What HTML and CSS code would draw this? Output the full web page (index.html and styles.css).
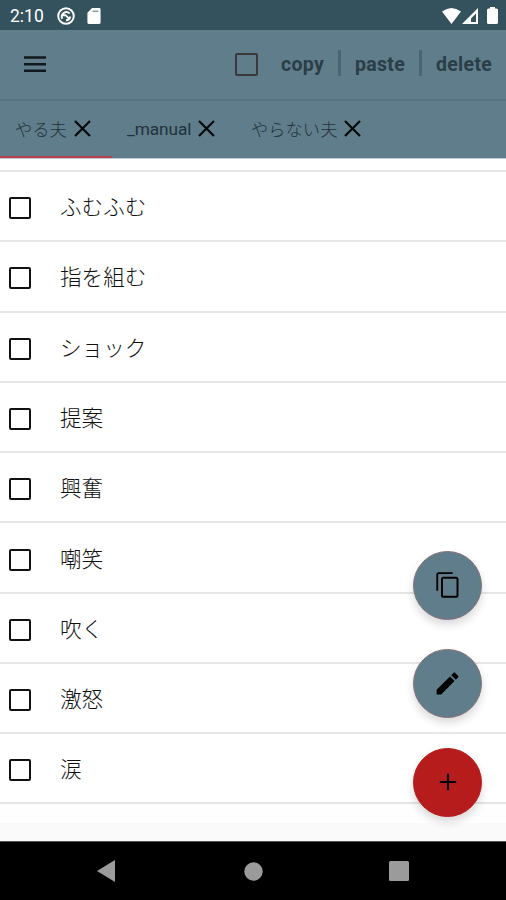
FILE: index.html
```html
<!DOCTYPE html>
<html lang="ja">
<head>
<meta charset="utf-8">
<title>やる夫</title>
<link rel="stylesheet" href="styles.css">
</head>
<body>
<div class="screen">
  <header class="status">
    <span class="clock">2:10</span>
    <svg class="status-sync" viewBox="0 0 18 18"><circle cx="9" cy="9" r="7.800"/><path d="M5.300 11.800A4.600 4.600 0 0 1 12.700 6.500M13.300 9.500A4.600 4.600 0 0 1 9 13.300M5.800 8.200h2.700l4 4"/></svg>
    <svg class="status-sd" viewBox="0 0 14 17"><path fill="#fff" d="M5 0h7.500A1.500 1.500 0 0 1 14 1.500V15.500A1.500 1.500 0 0 1 12.500 17h-11A1.500 1.500 0 0 1 0 15.500V5z"/><path stroke="#839aa3" stroke-width="1.600" d="M5.500 3.500h6"/></svg>
    <div class="signals">
      <svg width="19" height="16" viewBox="0 0 19 16"><path fill="#fff" d="M0 3.500Q9.500-3.500 19 3.500L9.500 16z"/></svg>
      <svg width="16" height="16" viewBox="0 0 16 16"><path fill="#fff" fill-rule="evenodd" d="M16 0v16H0zM14 5.500L9 10.500V14h5z"/></svg>
      <svg class="battery" width="11" height="17" viewBox="0 0 11 17"><path fill="#fff" d="M3 0h5v1.500h1.500A1.500 1.500 0 0 1 11 3v12.500A1.500 1.500 0 0 1 9.500 17h-8A1.500 1.500 0 0 1 0 15.500V3A1.500 1.500 0 0 1 1.500 1.500H3z"/></svg>
    </div>
  </header>
  <div class="toolbar">
    <svg class="menu" viewBox="0 0 22 16"><path d="M0 1.500h22M0 8.200h22M0 14.700h22"/></svg>
    <span class="check check-all"></span>
    <span class="action copy">copy</span><span class="bar"></span>
    <span class="action paste">paste</span><span class="bar"></span>
    <span class="action delete">delete</span>
  </div>
  <nav class="tabs">
    <div class="tab active"><span>やる夫</span><svg viewBox="0 0 17 17"><path d="M1 1l15 15M16 1L1 16"/></svg></div>
    <div class="tab manual"><span>_manual</span><svg viewBox="0 0 17 17"><path d="M1 1l15 15M16 1L1 16"/></svg></div>
    <div class="tab"><span>やらない夫</span><svg viewBox="0 0 17 17"><path d="M1 1l15 15M16 1L1 16"/></svg></div>
  </nav>
  <main class="list">
    <div class="row"><span class="check"></span><span class="label">ふむふむ</span></div>
    <div class="row"><span class="check"></span><span class="label">指を組む</span></div>
    <div class="row"><span class="check"></span><span class="label">ショック</span></div>
    <div class="row"><span class="check"></span><span class="label">提案</span></div>
    <div class="row"><span class="check"></span><span class="label">興奮</span></div>
    <div class="row"><span class="check"></span><span class="label">嘲笑</span></div>
    <div class="row"><span class="check"></span><span class="label">吹く</span></div>
    <div class="row"><span class="check"></span><span class="label">激怒</span></div>
    <div class="row"><span class="check"></span><span class="label">涙</span></div>
  </main>
  <div class="below"></div>
  <footer class="navbar">
    <svg width="18" height="22" viewBox="0 0 18 22"><path d="M18 0v22L0 11z"/></svg>
    <svg class="home" width="19" height="19" viewBox="0 0 19 19"><circle cx="9.500" cy="9.500" r="9.200"/></svg>
    <svg width="20" height="20" viewBox="0 0 20 20"><rect width="20" height="20" rx="1.500"/></svg>
  </footer>
  <div class="fabs">
    <div class="fab"><svg width="28" height="28" viewBox="0 0 24 24"><path d="M16 1H4c-1.100 0-2 .9-2 2v14h1.600V2.600H16V1zm3 4H8c-1.100 0-2 .9-2 2v14c0 1.100.9 2 2 2h11c1.100 0 2-.9 2-2V7c0-1.100-.9-2-2-2zm.3 16.300H7.700V6.700h11.600v14.600z"/></svg></div>
    <div class="fab"><svg width="29" height="29" viewBox="0 0 24 24"><path d="M3 17.250V21h3.750L17.810 9.940l-3.750-3.750L3 17.250zM20.710 7.040c.39-.39.39-1.020 0-1.410l-2.340-2.340c-.39-.39-1.020-.39-1.410 0l-1.830 1.830 3.750 3.750 1.830-1.830z"/></svg></div>
    <div class="fab add"><svg width="28" height="28" viewBox="0 0 24 24"><path d="M19 12.900h-6.100v6.100h-1.800v-6.100H5v-1.800h6.100V5h1.800v6.100H19z"/></svg></div>
  </div>
</div>
</body>
</html>
```
FILE: styles.css
```css
* { box-sizing: border-box; }
body { margin: 0; font-family: Roboto, "Noto Sans CJK JP", sans-serif; }
svg { display: block; flex: none; }

.screen {
  position: relative;
  display: flex;
  flex-direction: column;
  width: 506px;
  height: 900px;
  overflow: hidden;
  background: #fefefe;
}

.status {
  flex: none;
  display: flex;
  align-items: center;
  height: 30px;
  padding: 1px 8px 0 10px;
  background: #34515e;
  color: #fff;
}
.clock { width: 47px; font-size: 17.500px; line-height: 28px; }
.status-sync { width: 18px; height: 18px; margin-right: 12px; fill: none; stroke: #fff; stroke-width: 1.900; }
.status-sd { width: 14px; height: 16px; }
.signals { display: flex; align-items: center; gap: 1px; margin-left: auto; }
.battery { margin-left: 8px; }

.toolbar {
  flex: none;
  display: flex;
  align-items: center;
  height: 71px;
  padding: 0 0 1px 24px;
  background: #607d8b;
  border-bottom: 2px solid #567480;
}
.menu { width: 22px; height: 16px; stroke: #10181d; stroke-width: 2.500; }
.check {
  flex: none;
  width: 22px;
  height: 22px;
  border: 2.500px solid #111;
  border-radius: 2px;
}
.check-all { width: 23px; height: 23px; margin: 0 23px 0 189px; border-color: #3a3838; }
.action { color: #2b3d46; font-size: 19.500px; font-weight: 700; letter-spacing: .3px; }
.copy { width: 57px; }
.bar { width: 3px; height: 26px; margin-top: -2px; background: #4b6572; }
.paste { width: 64px; margin-left: 14px; }
.delete { margin-left: 14px; }

.tabs {
  flex: none;
  display: flex;
  height: 57px;
  background: #607d8b;
}
.tab {
  display: flex;
  align-items: center;
  gap: 7px;
  padding: 0 20px 0 15px;
  border-bottom: 2px solid transparent;
  color: #22323a;
  font-size: 17.300px;
  font-weight: 300;
  white-space: nowrap;
}
.tab svg { width: 17px; height: 17px; fill: none; stroke: #05090b; stroke-width: 2.200; }
.active { width: 112px; border-bottom-color: #b84048; }
.manual { width: 124px; font-weight: 400; }
.manual span { letter-spacing: -.1px; }

.list {
  flex: none;
  padding-top: 11px;
  border-top: 1px solid #c3cdd2;
  background: #fff;
}
.row {
  display: flex;
  align-items: center;
  height: 70.300px;
  padding: 4px 0 0 9px;
  border-top: 2px solid #e6e6e6;
}
.row:last-child { height: 72px; border-bottom: 2px solid #e6e6e6; }
.label {
  margin-left: 29px;
  color: #111;
  font-size: 21.600px;
  font-weight: 300;
  line-height: 32px;
}
.below { flex: 1; margin-top: 19px; background: #fafafa; }

.navbar {
  flex: none;
  display: flex;
  align-items: center;
  justify-content: space-between;
  height: 59px;
  padding: 2px 97px;
  border-top: 1px solid #555;
  background: #000;
  fill: #9b9b9b;
}
.home { margin-left: 2px; }

.fabs {
  position: absolute;
  top: 550.500px;
  left: 413px;
  display: grid;
  gap: 29.500px;
}
.fab {
  display: grid;
  place-items: center;
  width: 69px;
  height: 69px;
  border: 1px solid #896f79;
  border-radius: 50%;
  background: #607d8b;
  box-shadow: 0 5px 8px rgba(0, 0, 0, .15);
}
.add { border-color: #b71c1c; background: #b71c1c; }
```
